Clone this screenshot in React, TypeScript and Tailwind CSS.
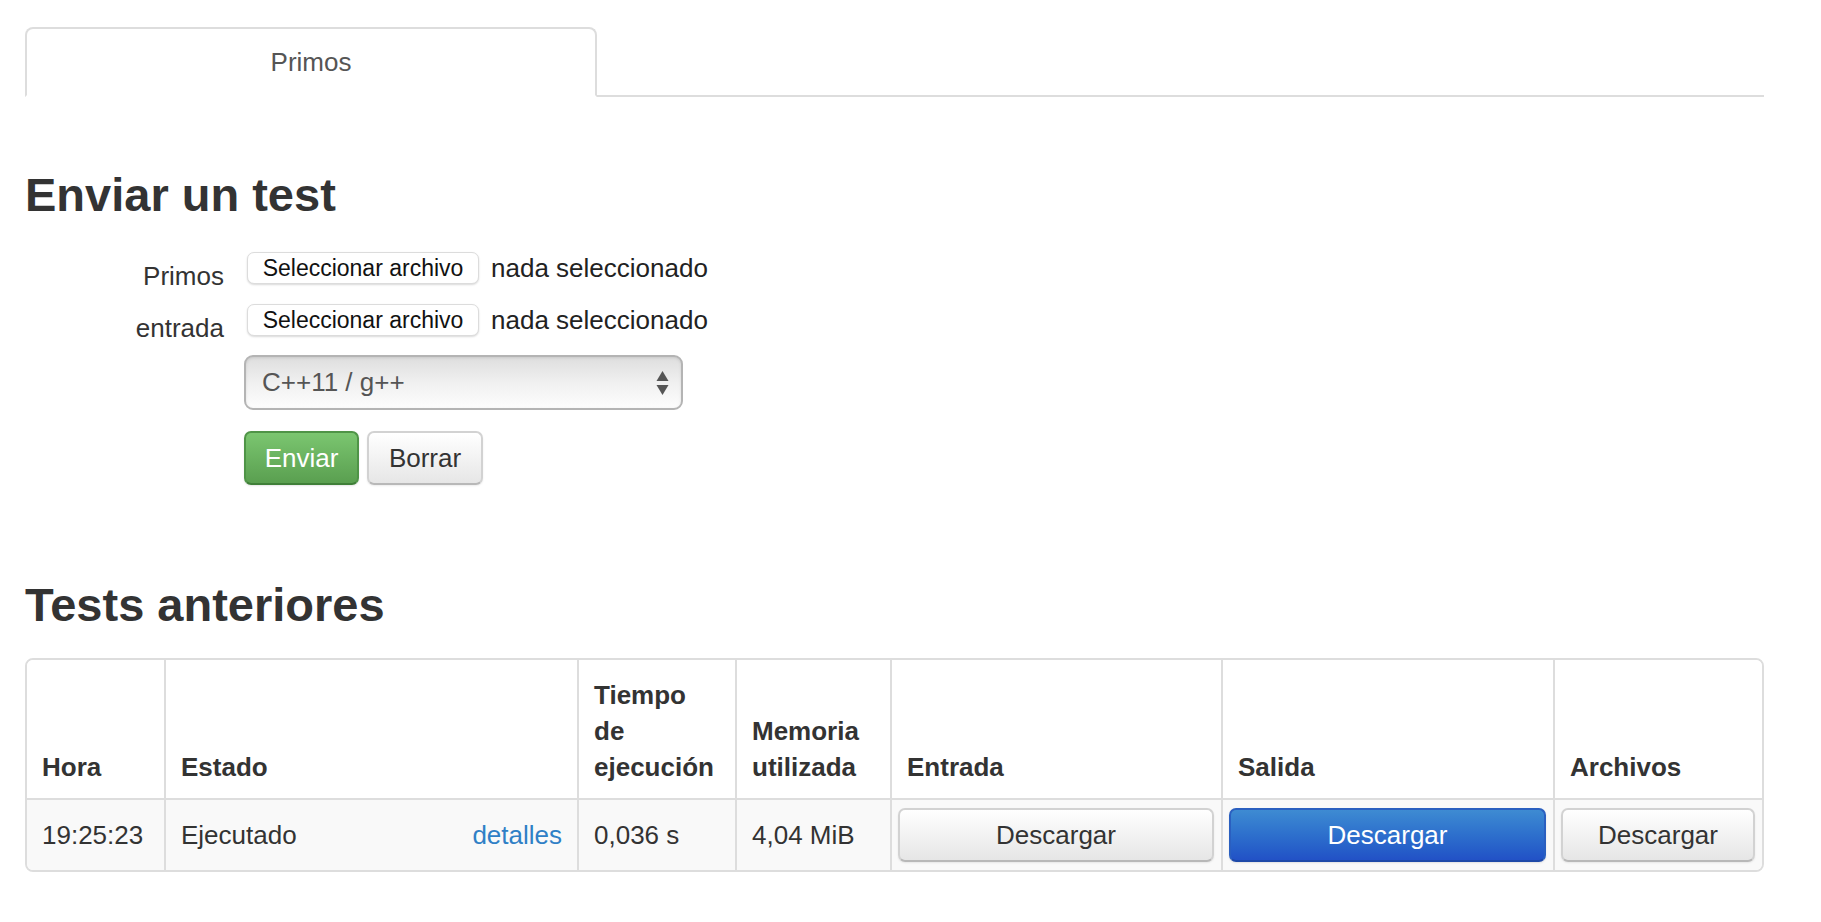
import React from "react";

const font = { fontFamily: '"Liberation Sans", Arial, Helvetica, sans-serif' };

function FileRow({ label }: { label: string }) {
  return (
    <div className="flex items-start">
      <div className="w-[199px] text-right pt-[6px] leading-[36px] text-[26px] text-[#333]">{label}</div>
      <div className="ml-[20px] flex items-center h-[32px]">
        <button className="ml-[3px] h-[32px] w-[232px] rounded-[7px] border border-[#dcdcdc] bg-white text-[23px] leading-[30px] text-[#111] shadow-[0_1px_2px_rgba(0,0,0,0.15)]">
          Seleccionar archivo
        </button>
        <span className="ml-[12px] text-[26px] text-[#222] leading-[32px]">nada seleccionado</span>
      </div>
    </div>
  );
}

function GrayBtn({ children, className = "" }: { children: React.ReactNode; className?: string }) {
  return (
    <button
      className={
        "rounded-[7px] border-2 border-[#d2d2d2] border-b-[#b8b8b8] bg-gradient-to-b from-white to-[#e6e6e6] text-[26px] text-[#333] shadow-[0_1px_2px_rgba(0,0,0,0.08)] " +
        className
      }
    >
      {children}
    </button>
  );
}

export default function App() {
  return (
    <div style={font} className="min-h-[922px] w-[1821px] bg-white pl-[25px] pr-[57px] text-[#333]">
      {/* Tabs */}
      <ul className="mt-[27px] flex border-b-2 border-[#ddd]">
        <li className="-mb-[2px] flex h-[70px] w-[572px] items-center justify-center rounded-t-[8px] border-2 border-[#ddd] border-b-white bg-white text-[26px] text-[#555]">
          Primos
        </li>
      </ul>

      <h2 className="mt-[72px] text-[47px] font-bold leading-[52px] text-[#333]">Enviar un test</h2>

      <div className="mt-[31px] flex flex-col gap-[10px]">
        <FileRow label="Primos" />
        <FileRow label="entrada" />
      </div>

      <div className="mt-[9px] pl-[219px]">
        <div className="relative flex h-[55px] w-[439px] items-center rounded-[9px] border-2 border-[#b4b4b4] bg-gradient-to-b from-[#dedede] via-[#f0f0f0] to-[#fdfdfd] pl-[16px] shadow-[inset_0_1px_3px_rgba(0,0,0,0.1)]">
          <span className="text-[26px] text-[#555]">C++11 / g++</span>
          <svg className="absolute right-[12px] top-[13px]" width="13" height="26" viewBox="0 0 13 26">
            <path d="M6.5 1 L12.5 11 L0.5 11 Z" fill="#555" />
            <path d="M6.5 25 L12.5 15 L0.5 15 Z" fill="#555" />
          </svg>
        </div>
        <div className="mt-[21px] flex gap-[8px]">
          <button className="h-[54px] w-[115px] rounded-[7px] border-2 border-[#4f9447] border-b-[#3f7f38] bg-gradient-to-b from-[#7bc670] to-[#5a9f50] text-[26px] text-white shadow-[0_1px_2px_rgba(0,0,0,0.1)]">
            Enviar
          </button>
          <GrayBtn className="h-[54px] w-[116px]">Borrar</GrayBtn>
        </div>
      </div>

      <h2 className="mt-[94px] text-[47px] font-bold leading-[52px] text-[#333]">Tests anteriores</h2>

      <div className="mt-[27px] w-[1739px] overflow-hidden rounded-[8px] border-2 border-[#ddd]">
        <table className="w-[1735px] table-fixed border-separate border-spacing-0 text-[26px] leading-[36px]">
          <thead>
            <tr className="bg-white">
              <th className="w-[137px] border-b-2 border-[#ddd] px-[15px] pt-[17px] pb-[13px] text-left align-bottom font-bold">Hora</th>
              <th className="w-[413px] border-b-2 border-l-2 border-[#ddd] px-[15px] pt-[17px] pb-[13px] text-left align-bottom font-bold">Estado</th>
              <th className="w-[158px] border-b-2 border-l-2 border-[#ddd] px-[15px] pt-[17px] pb-[13px] text-left align-bottom font-bold">Tiempo de ejecución</th>
              <th className="w-[155px] border-b-2 border-l-2 border-[#ddd] px-[15px] pt-[17px] pb-[13px] text-left align-bottom font-bold">Memoria utilizada</th>
              <th className="w-[331px] border-b-2 border-l-2 border-[#ddd] px-[15px] pt-[17px] pb-[13px] text-left align-bottom font-bold">Entrada</th>
              <th className="w-[332px] border-b-2 border-l-2 border-[#ddd] px-[15px] pt-[17px] pb-[13px] text-left align-bottom font-bold">Salida</th>
              <th className="w-[209px] border-b-2 border-l-2 border-[#ddd] px-[15px] pt-[17px] pb-[13px] text-left align-bottom font-bold">Archivos</th>
            </tr>
          </thead>
          <tbody>
            <tr className="bg-[#f9f9f9]">
              <td className="px-[15px] py-[17px] align-middle">19:25:23</td>
              <td className="border-l-2 border-[#ddd] px-[15px] py-[17px] align-middle">
                <div className="flex justify-between">
                  <span>Ejecutado</span>
                  <span className="text-[#2f80c6]">detalles</span>
                </div>
              </td>
              <td className="border-l-2 border-[#ddd] px-[15px] py-[17px] align-middle">0,036 s</td>
              <td className="border-l-2 border-[#ddd] px-[15px] py-[17px] align-middle">4,04 MiB</td>
              <td className="border-l-2 border-[#ddd] py-[7px] pl-[6px] pr-[7px] align-middle">
                <GrayBtn className="h-[54px] w-full">Descargar</GrayBtn>
              </td>
              <td className="border-l-2 border-[#ddd] py-[7px] pl-[6px] pr-[7px] align-middle">
                <button className="h-[54px] w-full rounded-[7px] border-2 border-[#2a5fc0] border-b-[#1e49a8] bg-gradient-to-b from-[#3e8bd2] to-[#2251c6] text-[26px] text-white shadow-[0_1px_2px_rgba(0,0,0,0.1)]">
                  Descargar
                </button>
              </td>
              <td className="border-l-2 border-[#ddd] py-[7px] pl-[6px] pr-[7px] align-middle">
                <GrayBtn className="h-[54px] w-full">Descargar</GrayBtn>
              </td>
            </tr>
          </tbody>
        </table>
      </div>
    </div>
  );
}
